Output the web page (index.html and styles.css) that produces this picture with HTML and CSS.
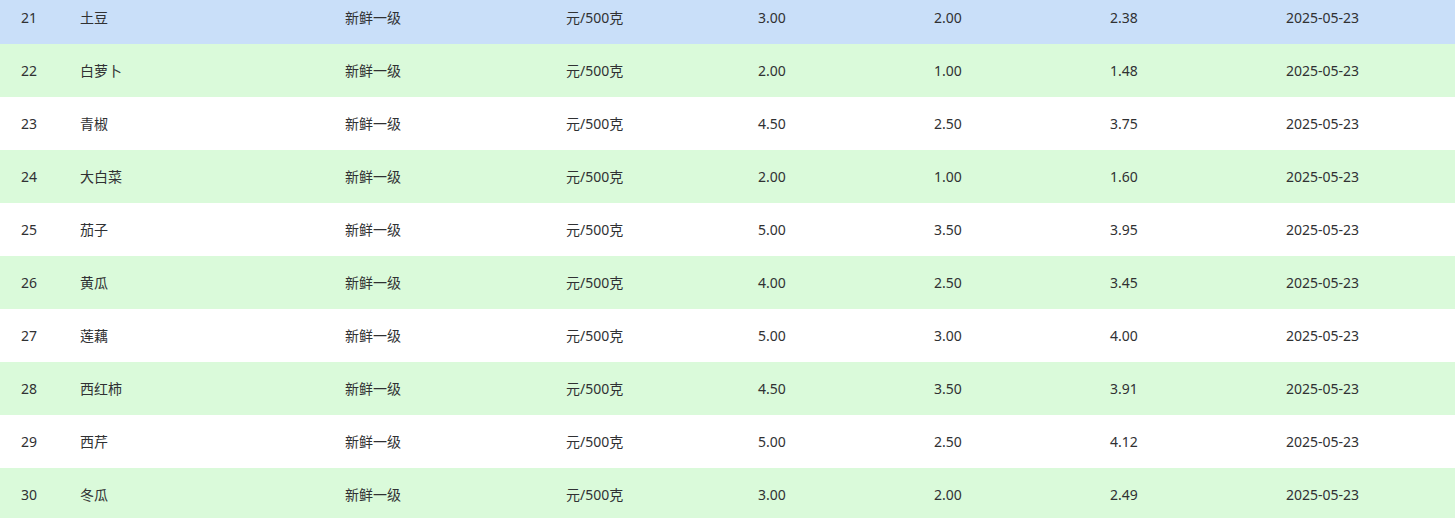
FILE: index.html
```html
<!DOCTYPE html>
<html lang="zh-CN">
<head>
<meta charset="utf-8">
<title>蔬菜价格</title>
<link rel="stylesheet" href="styles.css">
</head>
<body>
<div class="viewport">
<table class="price-table">
<colgroup>
<col class="c-no"><col class="c-name"><col class="c-grade"><col class="c-unit"><col class="c-num"><col class="c-num"><col class="c-num"><col class="c-date">
</colgroup>
<tbody>
<tr class="row hover"><td>21</td><td>土豆</td><td>新鲜一级</td><td>元/500克</td><td>3.00</td><td>2.00</td><td>2.38</td><td>2025-05-23</td></tr>
<tr class="row alt"><td>22</td><td>白萝卜</td><td>新鲜一级</td><td>元/500克</td><td>2.00</td><td>1.00</td><td>1.48</td><td>2025-05-23</td></tr>
<tr class="row"><td>23</td><td>青椒</td><td>新鲜一级</td><td>元/500克</td><td>4.50</td><td>2.50</td><td>3.75</td><td>2025-05-23</td></tr>
<tr class="row alt"><td>24</td><td>大白菜</td><td>新鲜一级</td><td>元/500克</td><td>2.00</td><td>1.00</td><td>1.60</td><td>2025-05-23</td></tr>
<tr class="row"><td>25</td><td>茄子</td><td>新鲜一级</td><td>元/500克</td><td>5.00</td><td>3.50</td><td>3.95</td><td>2025-05-23</td></tr>
<tr class="row alt"><td>26</td><td>黄瓜</td><td>新鲜一级</td><td>元/500克</td><td>4.00</td><td>2.50</td><td>3.45</td><td>2025-05-23</td></tr>
<tr class="row"><td>27</td><td>莲藕</td><td>新鲜一级</td><td>元/500克</td><td>5.00</td><td>3.00</td><td>4.00</td><td>2025-05-23</td></tr>
<tr class="row alt"><td>28</td><td>西红柿</td><td>新鲜一级</td><td>元/500克</td><td>4.50</td><td>3.50</td><td>3.91</td><td>2025-05-23</td></tr>
<tr class="row"><td>29</td><td>西芹</td><td>新鲜一级</td><td>元/500克</td><td>5.00</td><td>2.50</td><td>4.12</td><td>2025-05-23</td></tr>
<tr class="row alt"><td>30</td><td>冬瓜</td><td>新鲜一级</td><td>元/500克</td><td>3.00</td><td>2.00</td><td>2.49</td><td>2025-05-23</td></tr>
</tbody>
</table>
</div>
</body>
</html>
```

FILE: styles.css
```css
html, body {
  margin: 0;
  padding: 0;
  background: #ffffff;
}
body {
  font-family: "Noto Sans", "Noto Sans CJK SC", sans-serif;
  font-size: 14px;
  color: #303133;
  overflow: hidden;
}
.viewport {
  height: 518px;
  overflow: hidden;
}
.price-table {
  width: 1455px;
  table-layout: fixed;
  border-collapse: collapse;
  margin-top: -9px;
}
.c-no { width: 59px; }
.c-name { width: 265px; }
.c-grade { width: 221px; }
.c-unit { width: 192px; }
.c-num { width: 176px; }
.c-date { width: 190px; }
.price-table td {
  height: 53px;
  padding: 0 0 0 21px;
  vertical-align: middle;
  text-align: left;
  white-space: nowrap;
  box-sizing: border-box;
  line-height: 20px;
}
.row { background: #ffffff; }
.row.alt { background: #dafada; }
.row.hover { background: #c9dff9; }
```
